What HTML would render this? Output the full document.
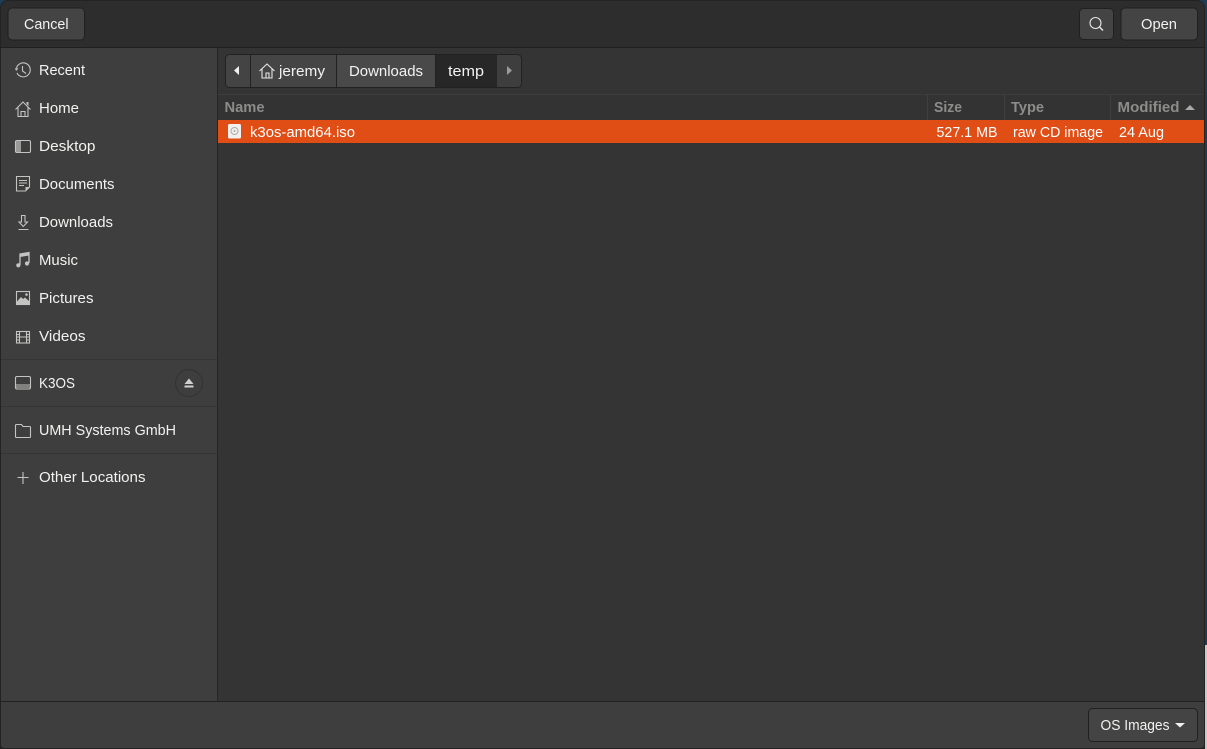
<!DOCTYPE html>
<html><head><meta charset="utf-8"><style>
html,body{margin:0;padding:0;background:#1d3c55;width:1207px;height:749px;overflow:hidden}
svg{display:block}
text{font-family:"Liberation Sans","DejaVu Sans",sans-serif;font-size:14.5px;fill:#f2f2f0}
.i{fill:none;stroke:#c4c4c2;stroke-width:1.1}
.f{fill:#c4c4c2;stroke:none}
.h{font-weight:bold;fill:#8c8c8a}
</style></head><body>
<svg width="1207" height="749" viewBox="0 0 1207 749" xmlns="http://www.w3.org/2000/svg">
<rect x="1205" y="645" width="2" height="104" fill="#c9c9c9"/>
<rect x="0" y="0" width="1205" height="749" rx="8" fill="#232323"/>
<rect x="0" y="700" width="1205" height="49" fill="#232323"/>
<path d="M1 47V8a7 7 0 0 1 7-7H1197a7 7 0 0 1 7 7V47z" fill="#2d2d2d"/>
<rect x="0" y="47" width="1205" height="1" fill="#1f1f1f"/>
<!-- sidebar -->
<rect x="1" y="48" width="216" height="653" fill="#3e3e3e"/>
<rect x="217" y="48" width="1" height="653" fill="#262626"/>
<rect x="218" y="48" width="986" height="653" fill="#343434"/>
<rect x="1" y="359" width="216" height="1" fill="#353535"/>
<rect x="1" y="406" width="216" height="1" fill="#353535"/>
<rect x="1" y="453" width="216" height="1" fill="#353535"/>
<!-- bottom -->
<rect x="0" y="701" width="1205" height="1" fill="#222"/>
<path d="M1 702H1204V745a3 3 0 0 1-3 3H4a3 3 0 0 1-3-3z" fill="#3e3e3e"/>
<!-- header buttons -->
<rect x="8" y="8" width="76.500" height="32" rx="4" fill="#444" stroke="#202020"/>
<text x="24" y="29" textLength="44.500" lengthAdjust="spacingAndGlyphs">Cancel</text>
<rect x="1079.500" y="8.500" width="34" height="31" rx="4" fill="#444" stroke="#202020"/>
<circle cx="1095.500" cy="23" r="5.500" fill="none" stroke="#e6e6e6" stroke-width="1.100"/>
<path d="M1099.500 27l3.500 3.500" stroke="#e6e6e6" stroke-width="1.400" fill="none"/>
<rect x="1121" y="8" width="76.500" height="32" rx="4" fill="#444" stroke="#202020"/>
<text x="1141" y="29" textLength="36" lengthAdjust="spacingAndGlyphs">Open</text>
<!-- path bar -->
<rect x="225.500" y="54.500" width="296" height="33" rx="4" fill="#3c3c3c" stroke="#222"/>
<path d="M226 59a4 4 0 0 1 4-4H250V87H230a4 4 0 0 1-4-4z" fill="#444"/>
<rect x="250" y="55" width="1" height="32" fill="#222"/>
<rect x="251" y="55" width="85" height="32" fill="#454545"/>
<rect x="336" y="55" width="1" height="32" fill="#222"/>
<rect x="337" y="55" width="98" height="32" fill="#494949"/>
<rect x="435" y="55" width="1" height="32" fill="#222"/>
<rect x="436" y="55" width="61" height="32" fill="#272727"/>
<path d="M497 55H517a4 4 0 0 1 4 4V83a4 4 0 0 1-4 4H497z" fill="#3e3e3e"/>
<path d="M239 66v9l-5-4.500z" fill="#f0f0f0"/>
<path d="M507 66v9l5-4.500z" fill="#9a9a9a"/>
<path d="M259.500 71l7.500-7 7.500 7M262 69v9h10v-9M266 78v-5h3v5" fill="none" stroke="#e6e6e6" stroke-width="1.100"/>
<text x="279" y="76" textLength="46" lengthAdjust="spacingAndGlyphs">jeremy</text>
<text x="349" y="76" textLength="74" lengthAdjust="spacingAndGlyphs">Downloads</text>
<text x="448" y="76" textLength="36" lengthAdjust="spacingAndGlyphs">temp</text>
<!-- list header -->
<rect x="218" y="94" width="986" height="1" fill="#3d3d3d"/>
<rect x="218" y="95" width="986" height="25" fill="#333"/>
<rect x="927" y="95" width="1" height="25" fill="#404040"/>
<rect x="1004" y="95" width="1" height="25" fill="#404040"/>
<rect x="1110" y="95" width="1" height="25" fill="#404040"/>
<text class="h" x="224.500" y="112" textLength="40" lengthAdjust="spacingAndGlyphs">Name</text>
<text class="h" x="934" y="112" textLength="28" lengthAdjust="spacingAndGlyphs">Size</text>
<text class="h" x="1011" y="112" textLength="33" lengthAdjust="spacingAndGlyphs">Type</text>
<text class="h" x="1117.500" y="112" textLength="62" lengthAdjust="spacingAndGlyphs">Modified</text>
<path d="M1185 110l5-5 5 5z" fill="#a8a8a6"/>
<!-- row -->
<rect x="218" y="120" width="986" height="23" fill="#e04d15"/>
<rect x="228" y="124" width="13" height="14.500" rx="1.500" fill="#f2f0ee"/>
<circle cx="234.500" cy="131" r="3.500" fill="none" stroke="#aaa" stroke-width="1"/>
<circle cx="234.500" cy="131" r="1" fill="#aaa"/>
<text x="250" y="137" textLength="105" lengthAdjust="spacingAndGlyphs" style="fill:#fff">k3os-amd64.iso</text>
<text x="936.500" y="137" textLength="61" lengthAdjust="spacingAndGlyphs" style="fill:#fff">527.1 MB</text>
<text x="1013" y="137" textLength="90" lengthAdjust="spacingAndGlyphs" style="fill:#fff">raw CD image</text>
<text x="1119" y="137" textLength="45" lengthAdjust="spacingAndGlyphs" style="fill:#fff">24 Aug</text>
<!-- sidebar items -->
<g>
<text x="39" y="75" textLength="46" lengthAdjust="spacingAndGlyphs">Recent</text>
<text x="39" y="113" textLength="40" lengthAdjust="spacingAndGlyphs">Home</text>
<text x="39" y="151" textLength="56.500" lengthAdjust="spacingAndGlyphs">Desktop</text>
<text x="39" y="189" textLength="75.500" lengthAdjust="spacingAndGlyphs">Documents</text>
<text x="39" y="227" textLength="74" lengthAdjust="spacingAndGlyphs">Downloads</text>
<text x="39" y="265" textLength="39" lengthAdjust="spacingAndGlyphs">Music</text>
<text x="39" y="303" textLength="54.500" lengthAdjust="spacingAndGlyphs">Pictures</text>
<text x="39" y="341" textLength="46.500" lengthAdjust="spacingAndGlyphs">Videos</text>
<text x="39" y="388" textLength="36" lengthAdjust="spacingAndGlyphs">K3OS</text>
<text x="39" y="435" textLength="137" lengthAdjust="spacingAndGlyphs">UMH Systems GmbH</text>
<text x="39" y="482" textLength="106.500" lengthAdjust="spacingAndGlyphs">Other Locations</text>
</g>
<!-- icons -->
<path class="i" d="M16.500 68a7 7 0 1 1 .5 5M22.500 66v5l3.500 2.500"/>
<path class="f" d="M15 68l3.500.5-2.500 2.500z"/>
<path class="i" d="M15.500 109.500l7.500-7.500 7.500 7.500M18 107v9.500h10V107M21 116.500v-5h4v5"/>
<path class="f" d="M26.500 102h2v4l-2-2z"/>
<rect class="i" x="15.500" y="140.500" width="15" height="12" rx="1.500"/>
<path d="M16 141h5v11h-5z" fill="#9a9a98"/>
<path class="i" d="M16.500 176.500h13v10.500l-4 4h-9zM19 180.500h8M19 183h8M19 185.500h5"/>
<path class="f" d="M25.500 191v-4h4z"/>
<path class="i" d="M21.500 215.500h3.500v6.500h2.500l-4.250 4.500-4.250-4.500h2.500zM18.500 229.500h10"/>
<path d="M20 265v-11l9-1.500v10.500" fill="none" stroke="#c4c4c2" stroke-width="1.300"/>
<path d="M20 254.500l9-1.500v2.500l-9 1.500z" class="f"/>
<circle class="f" cx="18.300" cy="265.300" r="2.100"/><circle class="f" cx="27" cy="263.500" r="2.100"/>
<rect class="i" x="16.500" y="291.500" width="13" height="13"/>
<path class="f" d="M17 301.500l4-4.500 2 2 2-1.500 4.500 4V304.500H17z"/><circle class="f" cx="26.500" cy="294.500" r="1.300"/>
<rect class="i" x="16.500" y="331.500" width="13" height="11.500"/>
<path class="i" d="M19.500 331.500v11.500M26.500 331.500v11.500M19.500 337h7M16.500 334.500h3M16.500 337h3M16.500 340h3M26.500 334.500h3M26.500 337h3M26.500 340h3"/>
<rect class="i" x="15.500" y="376.500" width="15" height="12.500" rx="1.500"/>
<path class="i" d="M16 385h14M16 387h14"/>
<path class="i" d="M15.500 425.500a1 1 0 0 1 1-1h5l1.500 2h6.500a1 1 0 0 1 1 1v9a1 1 0 0 1-1 1h-13a1 1 0 0 1-1-1z"/>
<path class="i" d="M23 472v12M17.500 477.500h11" stroke-width="1"/>
<circle cx="189" cy="383" r="13.500" fill="none" stroke="#323232"/>
<path d="M189 378.500l4.500 5.500h-9zM184.500 385.500h9v2h-9z" fill="#d0d0ce"/>
<!-- combo -->
<rect x="1088.500" y="708.500" width="109" height="33" rx="4" fill="#444" stroke="#202020"/>
<text x="1100.500" y="730" textLength="69" lengthAdjust="spacingAndGlyphs">OS Images</text>
<path d="M1175 723h10l-5 4.500z" fill="#f0f0f0"/>
</svg>
</body></html>
